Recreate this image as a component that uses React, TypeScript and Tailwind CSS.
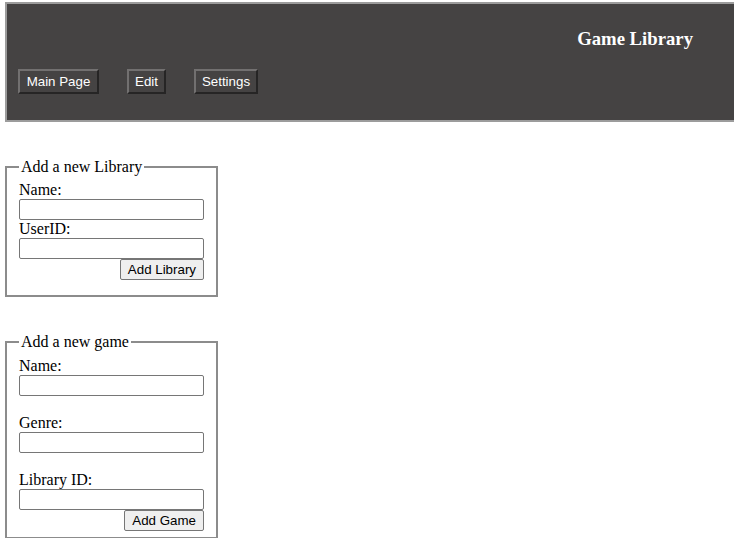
const navItems = [
  { label: 'Main Page', width: 'w-[81px]' },
  { label: 'Edit', width: 'w-[39px]' },
  { label: 'Settings', width: 'w-[64px]' },
];

function NavButton({ label, width }: { label: string; width: string }) {
  return (
    <button
      type="button"
      className={`${width} h-[25px] border-2 border-t-[#727070] border-l-[#727070] border-b-[#262525] border-r-[#262525] bg-[#454343] px-0 font-['Liberation_Sans',Arial,sans-serif] text-[13.33px] leading-none text-white`}
    >
      {label}
    </button>
  );
}

function Field({ label, spaced }: { label: string; spaced?: boolean }) {
  return (
    <div className={spaced ? 'mt-[18px]' : ''}>
      <label className="block h-[18px] leading-[18px]">{label}</label>
      <input
        type="text"
        className="block h-[21px] w-[185px] rounded-[2px] border border-[#767676] bg-white px-[2px] font-['Liberation_Sans',Arial,sans-serif] text-[13.33px]"
      />
    </div>
  );
}

function SubmitButton({ label }: { label: string }) {
  return (
    <div className="flex w-[185px] justify-end">
      <button
        type="button"
        className="h-[21px] rounded-[2px] border border-[#767676] bg-[#efefef] px-[7px] font-['Liberation_Sans',Arial,sans-serif] text-[13.33px] leading-none text-black"
      >
        {label}
      </button>
    </div>
  );
}

export default function App() {
  return (
    <div className="min-h-[538px] bg-white pt-[2px] font-['Liberation_Serif','Times_New_Roman',serif] text-[16px] text-black">
      <header className="ml-[5px] h-[120px] border-2 border-r-0 border-[#9c9c9c] bg-[#454343]">
        <div className="flex justify-end pr-[41px] pt-[24px]">
          <h3 className="text-[18.72px] font-bold leading-[22px] text-white">Game Library</h3>
        </div>
        <nav className="mt-[19px] flex gap-[28px] pl-[11px]">
          {navItems.map((item) => (
            <NavButton key={item.label} label={item.label} width={item.width} />
          ))}
        </nav>
      </header>

      <form className="mt-[36px]">
        <fieldset className="ml-[5px] w-[212px] border-2 border-[#8c8c8c] px-[12px] pb-[15px] pt-[5px]">
          <legend className="px-[2px] leading-[18px]">Add a new Library</legend>
          <Field label="Name:" />
          <Field label="UserID:" />
          <SubmitButton label="Add Library" />
        </fieldset>
      </form>

      <form className="mt-[36px]">
        <fieldset className="ml-[5px] w-[212px] border-2 border-[#8c8c8c] px-[12px] pb-[6px] pt-[6px]">
          <legend className="px-[2px] leading-[18px]">Add a new game</legend>
          <Field label="Name:" />
          <Field label="Genre:" spaced />
          <Field label="Library ID:" spaced />
          <SubmitButton label="Add Game" />
        </fieldset>
      </form>
    </div>
  );
}
